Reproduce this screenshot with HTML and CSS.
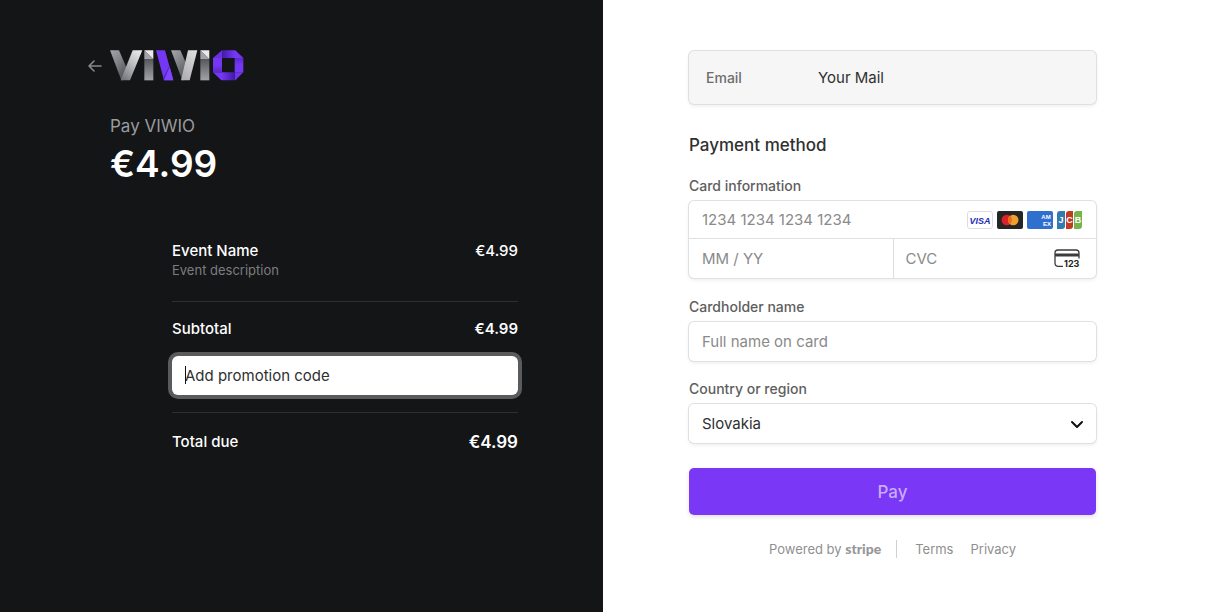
FILE: index.html
```html
<!DOCTYPE html>
<html lang="en">
<head>
<meta charset="utf-8">
<meta name="viewport" content="width=device-width, initial-scale=1">
<title>VIWIO checkout</title>
<link rel="stylesheet" href="styles.css">
</head>
<body>
<div class="checkout">
  <section class="summary">
    <div class="summary-inner">
      <header class="brand">
        <a class="back" href="#" aria-label="Back">
          <svg width="14" height="12" viewBox="0 0 14 12" fill="none" stroke="#87888a" stroke-width="1.6" stroke-linecap="round" stroke-linejoin="round"><path d="M6 1 1 6l5 5M1 6h12"/></svg>
        </a>
        <svg class="logo" width="134" height="31" viewBox="90 30 402 93" role="img" aria-label="VIWIO">
          <defs>
            <linearGradient id="armDown" x1="0" y1="0" x2="0.6" y2="1"><stop offset="0" stop-color="#a6a7ae"/><stop offset=".45" stop-color="#85868b"/><stop offset="1" stop-color="#55565a"/></linearGradient>
            <linearGradient id="armUp" x1="0.8" y1="0" x2="0.2" y2="1"><stop offset="0" stop-color="#e8e8e9"/><stop offset=".45" stop-color="#bcbdc0"/><stop offset="1" stop-color="#77787d"/></linearGradient>
            <linearGradient id="armLight" x1="0.8" y1="0" x2="0.3" y2="1"><stop offset="0" stop-color="#dededf"/><stop offset="1" stop-color="#aeaeb5"/></linearGradient>
            <linearGradient id="stem" x1="0" y1="0" x2="0" y2="1"><stop offset="0" stop-color="#56575a"/><stop offset="1" stop-color="#a2a2a9"/></linearGradient>
            <linearGradient id="violetV" x1="0" y1="0" x2="0" y2="1"><stop offset="0" stop-color="#5a28cc"/><stop offset=".5" stop-color="#7437f4"/></linearGradient>
            <linearGradient id="violetH" x1="0" y1="0" x2="1" y2="0"><stop offset="0" stop-color="#421aa6"/><stop offset=".6" stop-color="#7437f4"/></linearGradient>
            <linearGradient id="violetBack" x1="1" y1="0" x2="0" y2="0"><stop offset="0" stop-color="#421aa6"/><stop offset=".6" stop-color="#7437f4"/></linearGradient>
            <linearGradient id="violetUp" x1="0" y1="1" x2="0" y2="0"><stop offset="0" stop-color="#5a28cc"/><stop offset=".5" stop-color="#7437f4"/></linearGradient>
          </defs>
          <path fill="url(#armDown)" d="M90 31h27l23 53-12 37h-4z"/>
          <path fill="url(#armUp)" d="M158 31h29l-37 90h-28z"/>
          <path fill="url(#stem)" d="M193 57h27v64h-27z"/>
          <path fill="#a2a2a8" d="M193 31v26h27z"/>
          <path fill="#e9e9eb" d="M193 31h27v26z"/>
          <path fill="#7437f4" d="M228 31h27l25 90h-28z"/>
          <path fill="#5122bf" d="m268 78 4 14-20 29-2-7z"/>
          <path fill="#8145ff" d="m269 80 11 41h-28z"/>
          <path fill="url(#armDown)" d="M273 31h28l23 52-12 38h-5z"/>
          <path fill="url(#armLight)" d="M324 31h28l-23 90h-26z"/>
          <path fill="url(#stem)" d="M361 57h27v64h-27z"/>
          <path fill="#a2a2a8" d="M361 31v26h27z"/>
          <path fill="#e9e9eb" d="M361 31h27v26z"/>
          <path fill="url(#violetH)" d="M426 31h40l24 23h-64z"/>
          <path fill="url(#violetV)" d="M490 54v43h-26V54z"/>
          <path fill="#7134f0" d="M464 97h26l-24 24h-2z"/>
          <path fill="url(#violetBack)" d="M464 97v24h-40l-25-24z"/>
          <path fill="url(#violetUp)" d="M399 54h27v43h-27z"/>
          <path fill="#6830df" d="M426 31v23h-27z"/>
        </svg>
      </header>
      <p class="payee">Pay VIWIO</p>
      <h1 class="amount">€4.99</h1>
      <div class="details">
        <div class="line"><span>Event Name</span><span>€4.99</span></div>
        <p class="description">Event description</p>
        <hr class="rule">
        <div class="line"><span>Subtotal</span><span class="strong">€4.99</span></div>
        <div class="promo">
          <input class="promo-input" type="text" placeholder="Add promotion code" aria-label="Add promotion code">
          <span class="caret"></span>
        </div>
        <hr class="rule">
        <div class="line"><span>Total due</span><span class="total">€4.99</span></div>
      </div>
    </div>
  </section>

  <main class="payment">
    <form class="form">
      <div class="box email">
        <label class="email-label" for="email">Email</label>
        <input class="email-input" id="email" type="text" value="Your Mail" readonly>
      </div>
      <h2 class="heading">Payment method</h2>
      <label class="label" for="card">Card information</label>
      <div class="box card">
        <div class="cell number">
          <input class="field" id="card" type="text" placeholder="1234 1234 1234 1234">
          <span class="brands">
            <svg width="26" height="18" viewBox="0 0 26 18" role="img" aria-label="Visa"><rect x=".5" y=".5" width="25" height="17" rx="2.5" fill="#fff" stroke="#dcdce2"/><text x="13" y="12.5" text-anchor="middle" class="visa-text">VISA</text></svg>
            <svg width="26" height="18" viewBox="0 0 26 18" role="img" aria-label="Mastercard"><rect width="26" height="18" rx="2" fill="#252525"/><circle cx="9.8" cy="9" r="5.3" fill="#d9222a"/><circle cx="16.2" cy="9" r="5.3" fill="#ee9f2d"/><path fill="#ec6a25" d="M13 4.8a5.3 5.3 0 0 1 0 8.4 5.3 5.3 0 0 1 0-8.4z"/></svg>
            <svg width="26" height="18" viewBox="0 0 26 18" role="img" aria-label="American Express"><rect width="26" height="18" rx="2" fill="#2f6fce"/><text x="19" y="8" text-anchor="middle" class="amex-text">AM</text><text x="20" y="15" text-anchor="middle" class="amex-text">EX</text></svg>
            <svg width="26" height="18" viewBox="0 0 26 18" role="img" aria-label="JCB"><path fill="#3479b0" d="M3 0h5v15a3 3 0 0 1-3 3H0V3a3 3 0 0 1 3-3z"/><path fill="#c33a22" d="M12 0h4v15a3 3 0 0 1-3 3H9V3a3 3 0 0 1 3-3z"/><path fill="#75b34b" d="M20 0h5v15a3 3 0 0 1-3 3h-5V3a3 3 0 0 1 3-3z"/><text x="4" y="12" text-anchor="middle" class="jcb-text">J</text><text x="12.5" y="12" text-anchor="middle" class="jcb-text">C</text><text x="21" y="12" text-anchor="middle" class="jcb-text">B</text></svg>
          </span>
        </div>
        <div class="cell"><input class="field" type="text" placeholder="MM / YY" aria-label="Expiration"></div>
        <div class="cell cvc">
          <input class="field" type="text" placeholder="CVC" aria-label="CVC">
          <svg class="cvc-icon" width="27" height="20" viewBox="0 0 27 20" aria-hidden="true"><path d="M9 17.3H4a3 3 0 0 1-3-3V4a3 3 0 0 1 3-3h18a3 3 0 0 1 3 3v5.5" fill="none" stroke="#3b3b3d" stroke-width="1.3"/><path fill="#3b3b3d" d="M1 4.5h24v3H1z"/><text x="10" y="18" class="cvc-text">123</text></svg>
        </div>
      </div>
      <label class="label" for="name">Cardholder name</label>
      <div class="box single"><input class="field" id="name" type="text" placeholder="Full name on card"></div>
      <label class="label" for="country">Country or region</label>
      <div class="box single">
        <select class="field select" id="country"><option>Slovakia</option></select>
        <svg class="chevron" width="14" height="9" viewBox="0 0 14 9" fill="none" stroke="#111" stroke-width="2" stroke-linecap="round" stroke-linejoin="round"><path d="m2 2 5 5 5-5"/></svg>
      </div>
      <button class="pay" type="button">Pay</button>
      <footer class="footer">
        <a class="powered" href="#">Powered by <span class="stripe">stripe</span></a>
        <nav class="links"><a href="#">Terms</a><a href="#">Privacy</a></nav>
      </footer>
    </form>
  </main>
</div>
</body>
</html>
```
FILE: styles.css
```css
* { box-sizing: border-box; }
body {
  margin: 0;
  font-family: Inter, "Liberation Sans", sans-serif;
  font-size: 15px;
  line-height: 24px;
  color: #303030;
  background: #fff;
}
p, h1, h2 { margin: 0; }
a { color: inherit; text-decoration: none; }
input, select, button { font: inherit; color: inherit; }

.checkout { display: grid; grid-template-columns: 1fr 1fr; min-height: 100vh; }

.summary {
  display: flex;
  justify-content: flex-end;
  padding: 50px 85px 50px 0;
  background: #141517;
  color: #fff;
}
.summary-inner { width: 100%; max-width: 430px; }
.brand { display: flex; align-items: center; gap: 8px; }
.back { display: flex; }
.logo { display: block; }
.payee { margin: 33px 0 0 22px; font-size: 17px; color: #9a9b9d; }
.amount { margin: 2px 0 0 22px; font-size: 37px; line-height: 48px; font-weight: 600; }
.details { margin: 51px 0 0 84px; }
.line { display: flex; justify-content: space-between; font-weight: 500; }
.strong { font-weight: 600; }
.total { font-size: 17px; font-weight: 600; }
.description { font-size: 13px; line-height: 14px; color: #7c7d7f; }
.rule { height: 1px; margin: 0; border: 0; background: #2e2f31; }
.description + .rule { margin: 24px 0 15px; }
.promo { position: relative; margin: 15px 0 17px; }
.promo-input {
  display: block;
  width: 100%;
  height: 39px;
  padding: 0 13px;
  border: 0;
  border-radius: 6px;
  outline: 0;
  background: #fff;
  box-shadow: 0 0 0 4px #5a5b5d;
}
.promo-input::placeholder { color: #303030; opacity: 1; }
.caret { position: absolute; left: 13px; top: 10px; width: 1px; height: 18px; background: #111; }
.promo + .rule { margin-bottom: 17px; }

.payment { padding: 51px 0 50px 86px; }
.form { width: 100%; max-width: 407px; display: flex; flex-direction: column; }
.box {
  border-radius: 5px;
  background: #fff;
  box-shadow: 0 0 0 1px #e0e0e0, 0 2px 4px rgba(0, 0, 0, .08);
}
.email { display: flex; align-items: center; height: 53px; padding: 0 17px; background: #f6f6f6; }
.email-label { flex: 0 0 112px; font-size: 14px; font-weight: 500; color: #6d6d6d; }
.email-input { flex: 1; min-width: 0; padding: 0; border: 0; outline: 0; background: transparent; }
.heading { margin: 29px 0 19px; font-size: 17px; font-weight: 500; }
.label { margin-bottom: 5px; font-size: 14px; line-height: 20px; font-weight: 500; color: #5e5e5e; }
.card { display: grid; grid-template-columns: minmax(0, 1fr) minmax(0, 1fr); margin-bottom: 19px; }
.cell { display: flex; align-items: center; height: 39px; }
.number { grid-column: 1 / -1; height: 38px; border-bottom: 1px solid #e0e0e0; }
.cvc { border-left: 1px solid #dedede; }
.field {
  flex: 1;
  width: 100%;
  min-width: 0;
  height: 100%;
  padding: 0 13px;
  border: 0;
  outline: 0;
  background: transparent;
}
.cvc .field { padding-left: 12px; }
.field::placeholder { color: #8a8a8a; opacity: 1; }
.brands { display: flex; gap: 4px; margin-right: 13px; }
.cvc-icon { margin-right: 15px; }
.visa-text { font: italic 700 9px "Liberation Sans", sans-serif; fill: #1f2bb5; }
.amex-text { font: 700 6px "Liberation Sans", sans-serif; fill: #fff; }
.jcb-text { font: 700 9px "Liberation Sans", sans-serif; fill: #fff; }
.cvc-text { font: 700 9px Inter, sans-serif; fill: #222; }
.single { position: relative; display: flex; height: 39px; margin-bottom: 18px; }
.select { appearance: none; }
.chevron { position: absolute; right: 12px; top: 16px; pointer-events: none; }
.pay {
  height: 47px;
  margin-top: 7px;
  border: 0;
  border-radius: 5px;
  background: #7a37f6;
  color: #c9adfb;
  font-size: 17px;
  font-weight: 500;
  box-shadow: 0 2px 4px rgba(0, 0, 0, .12);
}
.footer { display: flex; justify-content: center; align-items: center; margin-top: 25px; font-size: 13px; line-height: 18px; color: #8f8f8f; }
.powered { padding-right: 15px; border-right: 1px solid #d0d0d0; }
.stripe { font: 900 14px/16px Lato, sans-serif; color: #979797; }
.links { display: flex; gap: 17px; padding-left: 18px; }
```
